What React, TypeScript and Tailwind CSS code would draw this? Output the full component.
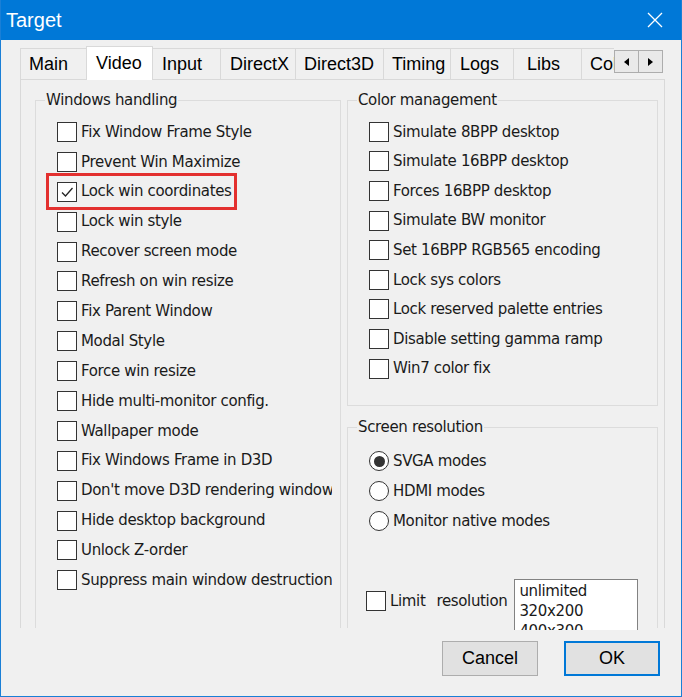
import React from "react";

const LEFT_ITEMS = [
  "Fix Window Frame Style",
  "Prevent Win Maximize",
  "Lock win coordinates",
  "Lock win style",
  "Recover screen mode",
  "Refresh on win resize",
  "Fix Parent Window",
  "Modal Style",
  "Force win resize",
  "Hide multi-monitor config.",
  "Wallpaper mode",
  "Fix Windows Frame in D3D",
  "Don't move D3D rendering window",
  "Hide desktop background",
  "Unlock Z-order",
  "Suppress main window destruction",
];

const COLOR_ITEMS = [
  "Simulate 8BPP desktop",
  "Simulate 16BPP desktop",
  "Forces 16BPP desktop",
  "Simulate BW monitor",
  "Set 16BPP RGB565 encoding",
  "Lock sys colors",
  "Lock reserved palette entries",
  "Disable setting gamma ramp",
  "Win7 color fix",
];

const RES_ITEMS = ["SVGA modes", "HDMI modes", "Monitor native modes"];

// widths/paddings read off the screenshot
const TABS: { label: string; cls: string; selected?: boolean }[] = [
  { label: "Main", cls: "w-[67px] pl-[8px] border-l" },
  { label: "Video", cls: "w-[67px] pl-[9px]", selected: true },
  { label: "Input", cls: "w-[68px] pl-[9px]" },
  { label: "DirectX", cls: "w-[75px] pl-[9px]" },
  { label: "Direct3D", cls: "w-[88px] pl-[8px]" },
  { label: "Timing", cls: "w-[67px] pl-[8px]" },
  { label: "Logs", cls: "w-[63px] pl-[9px]" },
  { label: "Libs", cls: "w-[68px] pl-[13px]" },
  { label: "Colors", cls: "w-[32px] pl-[8px] border-r-0" },
];

const Checkbox = ({ checked = false }: { checked?: boolean }) => (
  <span className="w-[20px] h-[20px] shrink-0 border border-[#333] bg-white flex items-center justify-center">
    {checked && (
      <svg width="14" height="14" viewBox="0 0 14 14">
        <path d="M2 7.5 L5.5 11 L12.5 3" fill="none" stroke="#222" strokeWidth="1.3" />
      </svg>
    )}
  </span>
);

const Radio = ({ checked = false }: { checked?: boolean }) => (
  <span className="w-[20px] h-[20px] shrink-0 rounded-full border border-[#333] bg-white flex items-center justify-center">
    {checked && <span className="w-[11px] h-[11px] rounded-full bg-[#333]" />}
  </span>
);

export default function App() {
  return (
    <div className="w-[682px] h-[697px] bg-[#f0f0f0] border-x border-b border-[#1a7fd6] flex flex-col font-['DejaVu_Sans',sans-serif] text-[15px] tracking-[-0.35px] text-[#1a1a1a] overflow-hidden">
      {/* title bar */}
      <div className="h-[40px] shrink-0 bg-[#0078d7] flex items-center justify-between pl-[5px] pr-[18px] text-white font-['Liberation_Sans',sans-serif] text-[20px] tracking-normal">
        <span>Target</span>
        <svg width="16" height="16" viewBox="0 0 16 16">
          <path d="M1 1 L15 15 M15 1 L1 15" stroke="#fff" strokeWidth="1.3" />
        </svg>
      </div>

      {/* tabs */}
      <div className="mt-[6px] ml-[19px] h-[33px] flex items-end font-['Liberation_Sans',sans-serif] text-[18px] tracking-normal text-black">
        {TABS.map((t) =>
          t.selected ? (
            <div
              key={t.label}
              className={`${t.cls} relative z-10 -ml-px -mb-px h-[34px] bg-white border border-b-0 border-[#d9d9d9] flex items-center`}
            >
              {t.label}
            </div>
          ) : (
            <div
              key={t.label}
              className={`${t.cls} h-[31px] border-t border-r border-[#d9d9d9] flex items-center overflow-hidden whitespace-nowrap`}
            >
              {t.label}
            </div>
          )
        )}
        <div className="self-start mt-[4px] flex">
          <span className="w-[25px] h-[23px] border border-[#adadad] bg-[#e9e9e9] flex items-center justify-center">
            <svg width="5" height="8" viewBox="0 0 5 8"><path d="M5 0 L0 4 L5 8 Z" fill="#000" /></svg>
          </span>
          <span className="w-[25px] h-[23px] -ml-px border border-[#adadad] bg-[#e9e9e9] flex items-center justify-center">
            <svg width="5" height="8" viewBox="0 0 5 8"><path d="M0 0 L5 4 L0 8 Z" fill="#000" /></svg>
          </span>
        </div>
      </div>

      {/* tab page */}
      <div className="ml-[19px] w-[645px] h-[549px] shrink-0 border-t border-x border-[#d9d9d9] pl-[14px] pt-[10px] flex gap-[6px]">
        <fieldset className="w-[306px] h-[538px] border border-b-0 border-[#dcdcdc] pl-[9px]">
          <legend className="px-[1px] leading-[20px]">Windows handling</legend>
          <div className="mt-[7px] ml-[12px] flex flex-col">
            {LEFT_ITEMS.map((label, i) => (
              <div key={label} className="relative h-[29.9px] flex items-center gap-[4px] whitespace-nowrap">
                <Checkbox checked={i === 2} />
                <span className="overflow-hidden w-[251px]">{label}</span>
                {i === 2 && (
                  <span className="absolute left-[-11px] top-[-4px] w-[191px] h-[37px] border-[3px] border-[#e3302f]" />
                )}
              </div>
            ))}
          </div>
        </fieldset>

        <div className="w-[311px] flex flex-col gap-[11px]">
          <fieldset className="h-[316px] border border-[#dcdcdc] pl-[9px]">
            <legend className="px-[1px] leading-[20px]">Color management</legend>
            <div className="mt-[7px] ml-[12px] flex flex-col">
              {COLOR_ITEMS.map((label) => (
                <div key={label} className="h-[29.6px] flex items-center gap-[4px] whitespace-nowrap">
                  <Checkbox />
                  <span>{label}</span>
                </div>
              ))}
            </div>
          </fieldset>

          <fieldset className="h-[211px] border border-b-0 border-[#dcdcdc] pl-[9px]">
            <legend className="px-[1px] leading-[20px]">Screen resolution</legend>
            <div className="mt-[9px] ml-[12px] flex flex-col">
              {RES_ITEMS.map((label, i) => (
                <div key={label} className="h-[30px] flex items-center gap-[4px] whitespace-nowrap">
                  <Radio checked={i === 0} />
                  <span>{label}</span>
                </div>
              ))}
            </div>
            <div className="mt-[43px] ml-[9px] flex items-start">
              <div className="mt-[11px] flex items-center">
                <Checkbox />
                <span className="ml-[4px]">Limit</span>
                <span className="ml-[11px]">resolution</span>
              </div>
              <div className="ml-[7px] w-[124px] h-[51px] bg-white border border-b-0 border-[#828282] pl-[4px] pt-[1px] overflow-hidden leading-[20px]">
                <div>unlimited</div>
                <div>320x200</div>
                <div>400x300</div>
              </div>
            </div>
          </fieldset>
        </div>
      </div>

      {/* buttons */}
      <div className="mt-[13px] pr-[21px] flex justify-end gap-[26px] font-['Liberation_Sans',sans-serif] text-[18px] tracking-normal text-black">
        <button className="w-[96px] h-[35px] bg-[#e1e1e1] border border-[#adadad]">Cancel</button>
        <button className="w-[96px] h-[35px] bg-[#e1e1e1] border-2 border-[#0078d7]">OK</button>
      </div>
    </div>
  );
}
